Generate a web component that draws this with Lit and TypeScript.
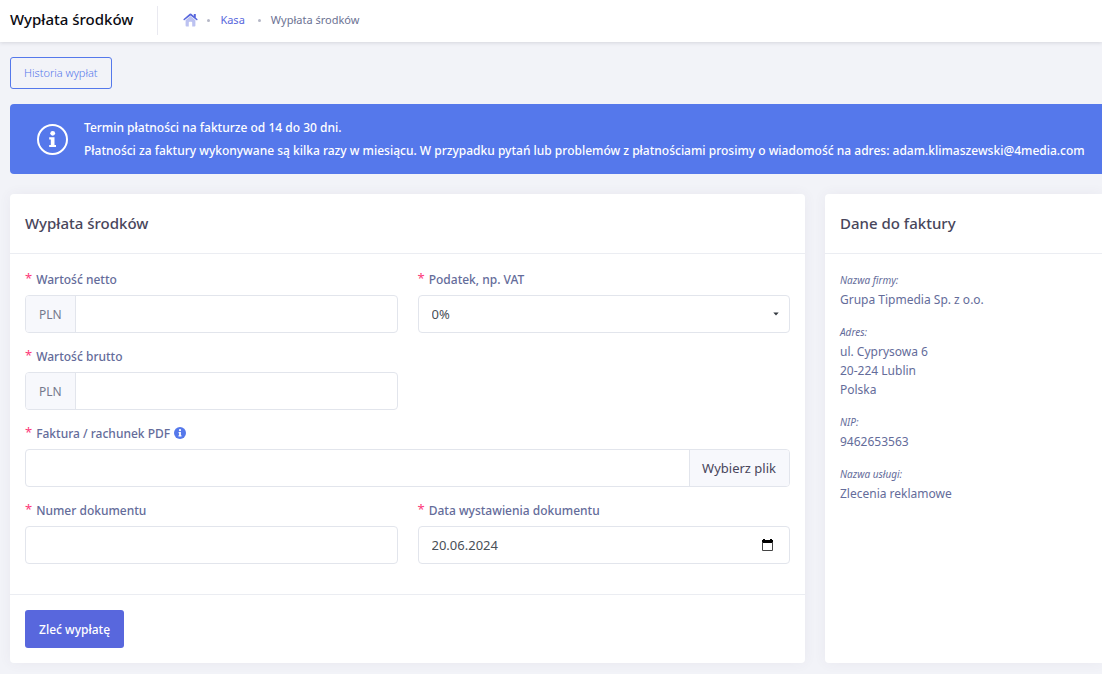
import { LitElement, html, css, svg } from "lit";
import { customElement, property } from "lit/decorators.js";

const base = css`
  *,
  *::before,
  *::after {
    box-sizing: border-box;
  }
`;

@customElement("page-header")
class PageHeader extends LitElement {
  @property() heading = "";

  static styles = [
    base,
    css`
      :host {
        display: flex;
        align-items: center;
        height: 42px;
        padding: 0 10px;
        background: #fff;
        box-shadow: 0 1px 4px rgba(60, 60, 80, 0.16);
      }
      .title {
        margin: 0;
        padding-bottom: 4px;
        font-size: 15px;
        font-weight: 500;
        color: #0b0b12;
      }
      .separator {
        width: 1px;
        height: 29px;
        margin: 0 25px 2px 24px;
        background: #e9e9f0;
      }
      .crumbs {
        display: flex;
        align-items: center;
        margin: 0;
        padding: 0 0 3px;
        list-style: none;
        font-size: 11px;
        color: #6c7293;
      }
      .crumb {
        display: flex;
        align-items: center;
      }
      .crumb + .crumb::before {
        content: "";
        width: 3px;
        height: 3px;
        margin: 2px 10px 0 9px;
        border-radius: 50%;
        background: #b5b7c6;
      }
      .crumb + .crumb + .crumb::before {
        margin-left: 13px;
      }
      .home {
        display: block;
        width: 15px;
        height: 14px;
      }
      .link {
        color: #5867dd;
        text-decoration: none;
      }
    `,
  ];

  render() {
    return html`
      <h1 class="title">${this.heading}</h1>
      <span class="separator"></span>
      <nav aria-label="breadcrumb">
        <ol class="crumbs">
          <li class="crumb">
            <a class="link" href="#" aria-label="Start">
              <svg class="home" viewBox="0 0 15 14" aria-hidden="true">
                <path fill="#5867dd" opacity=".4" d="M2.600 7.300 7.500 2.900l4.900 4.400v5.200q0 .9-.9.9H9.200V9.600q0-.8-.8-.8H6.600q-.8 0-.8.8v3.800H3.500q-.9 0-.9-.9z" />
                <path fill="#5867dd" d="M10.800 1h2v3.700l1.500 1.200q.6.6.1 1.100-.5.600-1.100.1L7.500 2.400 1.700 7.100Q1.100 7.600.600 7q-.5-.500.1-1.100L6.700.8q.8-.7 1.600 0l2.500 2.100z" />
              </svg>
            </a>
          </li>
          <li class="crumb"><a class="link" href="#">Kasa</a></li>
          <li class="crumb" aria-current="page">${this.heading}</li>
        </ol>
      </nav>
    `;
  }
}

@customElement("info-banner")
class InfoBanner extends LitElement {
  static styles = [
    base,
    css`
      :host {
        display: flex;
        align-items: center;
        gap: 16px;
        padding: 12px 0 12px 27px;
        border-radius: 4px 0 0 4px;
        background: #5578eb;
        color: #fff;
        font-size: 12px;
        line-height: 23px;
        font-weight: 500;
      }
      .icon {
        flex: none;
        width: 31px;
        height: 31px;
      }
    `,
  ];

  render() {
    return html`
      <svg class="icon" viewBox="0 0 31 31" aria-hidden="true">
        <circle cx="15.5" cy="15.5" r="14.5" fill="none" stroke="#fff" stroke-width="2" />
        <circle cx="15.7" cy="9.3" r="2.4" fill="#fff" />
        <path fill="#fff" d="M12.2 13.3h5.300v7.600h1.500v2.200h-6.800v-2.200h1.600v-5.400h-1.600z" />
      </svg>
      <div><slot></slot></div>
    `;
  }
}

@customElement("panel-card")
class PanelCard extends LitElement {
  @property() heading = "";

  static styles = [
    base,
    css`
      :host {
        display: block;
        min-width: 0;
        background: #fff;
        border-radius: 4px;
        box-shadow: 0 0 13px rgba(82, 63, 105, 0.06);
      }
      .head {
        display: flex;
        align-items: center;
        height: 60px;
        padding: 0 15px 2px;
        border-bottom: 1px solid #ebedf2;
      }
      .title {
        margin: 0;
        font-size: 15px;
        font-weight: 500;
        color: #48465b;
      }
    `,
  ];

  render() {
    return html`
      <header class="head"><h2 class="title">${this.heading}</h2></header>
      <slot></slot>
    `;
  }
}

@customElement("withdraw-form")
class WithdrawForm extends LitElement {
  static styles = [
    base,
    css`
      :host {
        display: block;
        font-size: 13px;
        color: #495057;
      }
      .fields {
        display: grid;
        grid-template-columns: 1fr 1fr;
        gap: 13px 20px;
        padding: 15px 15px 30px;
      }
      .field {
        display: flex;
        flex-direction: column;
        gap: 6px;
        min-width: 0;
      }
      .first {
        grid-column: 1;
      }
      .wide {
        grid-column: 1 / -1;
      }
      .label {
        display: flex;
        align-items: center;
        gap: 4px;
        height: 20px;
        font-size: 12px;
        font-weight: 500;
        color: #646c9a;
      }
      .star {
        align-self: flex-start;
        font-size: 13px;
        font-weight: 400;
        line-height: 18px;
        color: #fd397a;
      }
      .info {
        width: 12px;
        height: 12px;
      }
      .box {
        display: flex;
        align-items: stretch;
        height: 38px;
        border: 1px solid #e2e5ec;
        border-radius: 4px;
        background: #fff;
        overflow: hidden;
      }
      .box:focus-within {
        border-color: #9aabff;
      }
      .prefix {
        display: flex;
        align-items: center;
        padding: 0 13px;
        border-right: 1px solid #e2e5ec;
        background: #f7f8fc;
        color: #74788d;
        font-size: 12px;
      }
      .control {
        flex: 1;
        min-width: 0;
        padding: 0 13px;
        border: 0;
        outline: 0;
        background: transparent;
        color: #495057;
        font: inherit;
        appearance: none;
      }
      .pick {
        position: relative;
      }
      .caret {
        position: absolute;
        right: 10px;
        top: 16px;
        width: 6px;
        height: 4px;
        pointer-events: none;
      }
      .file {
        width: 0;
        flex: 1;
        opacity: 0;
      }
      .browse {
        display: flex;
        align-items: center;
        padding: 0 13px 0 12px;
        border-left: 1px solid #e2e5ec;
        background: #f7f8fc;
        color: #48465b;
        font-size: 13px;
      }
      .calendar {
        display: flex;
        align-items: center;
        padding: 0 16px;
        border: 0;
        background: none;
      }
      .foot {
        padding: 15px;
        border-top: 1px solid #ebedf2;
      }
      .submit {
        height: 38px;
        padding: 0 14px;
        border: 0;
        border-radius: 3px;
        background: #5867dd;
        color: #fff;
        font: inherit;
        font-size: 12px;
        font-weight: 500;
      }
    `,
  ];

  private label(id: string, text: string, extra: unknown = null) {
    return html`<label class="label" for=${id}><span class="star">*</span><span>${text}</span>${extra}</label>`;
  }

  private amount(id: string, text: string) {
    return html`
      <div class="field first">
        ${this.label(id, text)}
        <div class="box">
          <span class="prefix">PLN</span>
          <input class="control" id=${id} type="text" inputmode="decimal" />
        </div>
      </div>
    `;
  }

  render() {
    const info = html`<svg class="info" viewBox="0 0 12 12" aria-hidden="true">
      <circle cx="6" cy="6" r="6" fill="#5578eb" />
      ${svg`<circle cx="6" cy="3.2" r="1.1" fill="#fff" /><path fill="#fff" d="M4.600 5h2.300v3.200h.6v1.200h-3V8.200h.6v-2h-.5z" />`}
    </svg>`;

    return html`
      <form @submit=${(e: Event) => e.preventDefault()}>
        <div class="fields">
          ${this.amount("net", "Wartość netto")}
          <div class="field">
            ${this.label("tax", "Podatek, np. VAT")}
            <div class="box pick">
              <select class="control" id="tax">
                <option>0%</option>
                <option>8%</option>
                <option>23%</option>
              </select>
              <svg class="caret" viewBox="0 0 6 4" aria-hidden="true"><path fill="#343a40" d="M.3.5h5.400L3 3.500z" /></svg>
            </div>
          </div>
          ${this.amount("gross", "Wartość brutto")}
          <div class="field wide">
            ${this.label("invoice", "Faktura / rachunek PDF", info)}
            <div class="box">
              <input class="file" id="invoice" type="file" accept="application/pdf" />
              <label class="browse" for="invoice">Wybierz plik</label>
            </div>
          </div>
          <div class="field">
            ${this.label("number", "Numer dokumentu")}
            <div class="box"><input class="control" id="number" type="text" /></div>
          </div>
          <div class="field">
            ${this.label("issued", "Data wystawienia dokumentu")}
            <div class="box">
              <input class="control" id="issued" type="text" value="20.06.2024" />
              <button class="calendar" type="button" aria-label="Kalendarz">
                <svg width="11" height="12" viewBox="0 0 11 12" aria-hidden="true">
                  <path fill="#000" d="M0 1h1V0h2v1h5V0h2v1h1v3H0z" />
                  <path fill="none" stroke="#444" d="M.5 3v8.500h10V3" />
                </svg>
              </button>
            </div>
          </div>
        </div>
        <footer class="foot"><button class="submit" type="submit">Zleć wypłatę</button></footer>
      </form>
    `;
  }
}

@customElement("invoice-details")
class InvoiceDetails extends LitElement {
  private rows: [string, string[]][] = [
    ["Nazwa firmy:", ["Grupa Tipmedia Sp. z o.o."]],
    ["Adres:", ["ul. Cyprysowa 6", "20-224 Lublin", "Polska"]],
    ["NIP:", ["9462653563"]],
    ["Nazwa usługi:", ["Zlecenia reklamowe"]],
  ];

  static styles = [
    base,
    css`
      :host {
        display: block;
        padding: 17px 15px;
        color: #646c9a;
      }
      .list {
        display: grid;
        gap: 14px;
        margin: 0;
      }
      .term {
        font-size: 10px;
        line-height: 19px;
        font-style: italic;
      }
      .value {
        margin: 0;
        font-size: 12px;
        line-height: 19px;
      }
    `,
  ];

  render() {
    return html`
      <dl class="list">
        ${this.rows.map(
          ([term, lines]) => html`<div>
            <dt class="term">${term}</dt>
            ${lines.map((line) => html`<dd class="value">${line}</dd>`)}
          </div>`
        )}
      </dl>
    `;
  }
}

@customElement("app-root")
class AppRoot extends LitElement {
  static styles = [
    base,
    css`
      :host {
        display: block;
        min-height: 100vh;
        background: #f2f3f8;
        font-family: "Noto Sans", sans-serif;
        font-size: 13px;
      }
      .main {
        display: flex;
        flex-direction: column;
        padding: 15px 0 11px 10px;
      }
      .history {
        align-self: flex-start;
        height: 32px;
        margin-bottom: 15px;
        padding: 0 13px 2px;
        border: 1px solid #5578eb;
        border-radius: 3px;
        background: transparent;
        color: #5578eb;
        font: inherit;
        font-size: 11px;
        font-weight: 300;
      }
      .columns {
        display: grid;
        grid-template-columns: minmax(0, 1fr) 277px;
        gap: 20px;
        margin-top: 20px;
      }
      .side {
        border-radius: 4px 0 0 4px;
      }
    `,
  ];

  render() {
    return html`
      <page-header heading="Wypłata środków"></page-header>
      <main class="main">
        <button class="history" type="button">Historia wypłat</button>
        <info-banner>
          Termin płatności na fakturze od 14 do 30 dni.<br />
          Płatności za faktury wykonywane są kilka razy w miesiącu. W przypadku pytań lub problemów z płatnościami prosimy o wiadomość na adres: adam.klimaszewski@4media.com
        </info-banner>
        <div class="columns">
          <panel-card heading="Wypłata środków"><withdraw-form></withdraw-form></panel-card>
          <panel-card class="side" heading="Dane do faktury"><invoice-details></invoice-details></panel-card>
        </div>
      </main>
    `;
  }
}
